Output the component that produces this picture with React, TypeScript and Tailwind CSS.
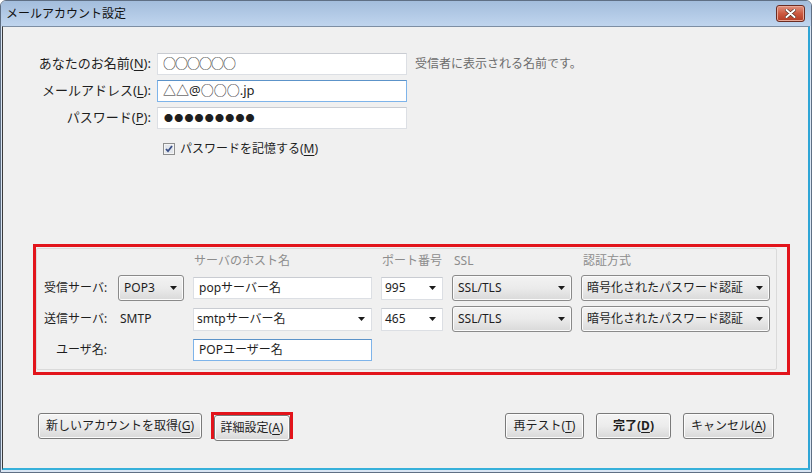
import React from "react"

const font = "font-['Noto_Sans','Noto_Sans_CJK_JP',sans-serif]"

function Arrow() {
    return (
        <svg width="7" height="4" viewBox="0 0 7 4" className="shrink-0">
            <path d="M0 0h7L3.5 4z" fill="#1b1b1b" />
        </svg>
    )
}

function Key({ k }: { k: string }) {
    return <span className="underline underline-offset-2">{k}</span>
}

// grey drop-down button (non editable combo)
function DropButton({ label, className }: { label: string; className: string }) {
    return (
        <div className={`flex h-[26px] items-center justify-between rounded-[3px] border border-[#8a8a8a] bg-gradient-to-b from-[#f3f3f3] via-[#ebebeb] to-[#d9d9d9] pl-[5px] pr-[6px] text-[12px] text-[#1e1e1e] shadow-[inset_0_0_0_1px_#fbfbfb] ${className}`}>
            <span>{label}</span>
            <Arrow />
        </div>
    )
}

// white editable combo
function EditCombo({ value, className }: { value: string; className: string }) {
    return (
        <div className={`flex h-[23px] items-center justify-between border border-[#dcdfe4] border-t-[#c9ccd2] bg-white pl-[3px] pr-[6px] text-[12px] text-[#1e1e1e] ${className}`}>
            <span>{value}</span>
            <Arrow />
        </div>
    )
}

function TextBox({ value, className, focused }: { value: React.ReactNode; className: string; focused?: boolean }) {
    return (
        <div className={`flex items-center bg-white pl-[5px] text-[#1e1e1e] border ${focused ? "border-[#7eb4ea] border-t-[#5c93c9]" : "border-[#dcdfe4] border-t-[#c9ccd2]"} ${className}`}>
            {value}
        </div>
    )
}

function Button({ children, className }: { children: React.ReactNode; className: string }) {
    return (
        <button className={`flex h-[26px] items-center justify-center rounded-[3px] border border-[#7a7a7a] bg-gradient-to-b from-[#f4f4f4] via-[#ececec] to-[#d8d8d8] text-[12px] text-[#1e1e1e] shadow-[inset_0_0_0_1px_#fcfcfc] ${className}`}>
            {children}
        </button>
    )
}

export default function App() {
    return (
        <div className={`${font} flex h-[473px] w-[812px] flex-col rounded-t-[6px] border border-[#5f6f84] bg-[#d9e5f3]`}>
            {/* title bar */}
            <div className="flex h-[25px] shrink-0 items-center justify-between rounded-t-[5px] bg-gradient-to-b from-[#a3bddc] to-[#c0d5ee] pl-[5px] pr-[6px]">
                <span className="text-[12px] text-[#111]">メールアカウント設定</span>
                <div className="flex h-[17px] w-[29px] items-center justify-center rounded-[3px] border border-[#6b2c22] bg-gradient-to-b from-[#e0917f] via-[#cc5a41] to-[#b23a24] shadow-[inset_0_0_0_1px_#e9a898]">
                    <svg width="11" height="9" viewBox="0 0 11 9">
                        <path d="M1.5 1l8 7M9.5 1l-8 7" stroke="#4a2a22" strokeWidth="3.2" strokeLinecap="round" />
                        <path d="M1.5 1l8 7M9.5 1l-8 7" stroke="#fff" strokeWidth="2" strokeLinecap="round" />
                    </svg>
                </div>
            </div>

            {/* client area */}
            <div className="mx-px mb-[2px] flex flex-1 flex-col border-l border-t border-l-[#3b3b3b] border-t-[#7d8ea3] border-r-2 border-b-2 border-r-[#2ea5d6] border-b-[#36b0da] bg-[#f0f0f0] pt-[26px]">
                {/* account fields */}
                <div className="grid grid-cols-[153px_250px_1fr] items-center gap-y-[5px] pl-px text-[13px] text-[#1e1e1e]">
                    <span className="pr-[6px] text-right">あなたのお名前(<Key k="N" />):</span>
                    <TextBox className="h-[22px] text-[13px] tracking-[-1px]" value="○○○○○○" />
                    <span className="pl-[8px] text-[12px] text-[#6d6d6d]">受信者に表示される名前です。</span>

                    <span className="pr-[6px] text-right">メールアドレス(<Key k="L" />):</span>
                    <TextBox focused className="h-[22px] text-[13px]" value="△△@○○○.jp" />
                    <span />

                    <span className="pr-[6px] text-right">パスワード(<Key k="P" />):</span>
                    <TextBox className="h-[22px] pl-[6px] text-[9px] tracking-[1.2px]" value="●●●●●●●●●" />
                    <span />

                    <span />
                    <label className="mt-[7px] flex h-[16px] items-center gap-[5px] pl-[6px] text-[12px]">
                        <svg width="12" height="12" viewBox="0 0 12 12" className="shrink-0">
                            <rect x="0.5" y="0.5" width="11" height="11" fill="#f4f4f4" stroke="#8e8f8f" />
                            <rect x="2" y="2" width="8" height="8" fill="#e2e6ec" />
                            <path d="M3 6l2 2.2L9 3" stroke="#3a4f86" strokeWidth="1.8" fill="none" />
                        </svg>
                        <span>パスワードを記憶する(<Key k="M" />)</span>
                    </label>
                    <span />
                </div>

                {/* server settings */}
                <div className="ml-[30px] mt-[87px] h-[131px] w-[757px] border-[3px] border-[#e2141b]">
                    <div className="mr-[10px] mt-px grid h-[122px] grid-cols-[65px_66px_179px_62px_120px_189px] grid-rows-[18px_26px_26px_26px] items-center gap-x-[9px] gap-y-[5px] rounded-[2px] border border-[#dadada] pl-[7px] pt-[3px] text-[12px] text-[#1e1e1e]">
                        <span />
                        <span />
                        <span className="pl-px text-[#8d8d8d]">サーバのホスト名</span>
                        <span className="pl-px text-[#8d8d8d]">ポート番号</span>
                        <span className="pl-[2px] text-[#8d8d8d]">SSL</span>
                        <span className="pl-[2px] text-[#8d8d8d]">認証方式</span>

                        <span>受信サーバ:</span>
                        <DropButton className="w-[66px]" label="POP3" />
                        <TextBox className="h-[22px] pl-[3px] text-[12px]" value="popサーバー名" />
                        <EditCombo className="w-[62px]" value="995" />
                        <DropButton className="w-[120px]" label="SSL/TLS" />
                        <DropButton className="w-[189px]" label="暗号化されたパスワード認証" />

                        <span>送信サーバ:</span>
                        <span className="pl-[2px]">SMTP</span>
                        <EditCombo className="w-[179px]" value="smtpサーバー名" />
                        <EditCombo className="w-[62px]" value="465" />
                        <DropButton className="w-[120px]" label="SSL/TLS" />
                        <DropButton className="w-[189px]" label="暗号化されたパスワード認証" />

                        <span className="pl-[12px]">ユーザ名:</span>
                        <span />
                        <TextBox focused className="h-[22px] pl-[3px] text-[12px]" value="POPユーザー名" />
                        <span />
                        <span />
                        <span />
                    </div>
                </div>

                {/* buttons */}
                <div className="mt-[37px] flex items-center justify-between pl-[35px] pr-[34px]">
                    <div className="flex items-center gap-[9px]">
                        <Button className="w-[164px]">新しいアカウントを取得(<Key k="G" />)</Button>
                        <div className="flex h-[27px] w-[82px] border-[3px] border-[#e2141b]">
                            <Button className="h-[21px] w-full">詳細設定(<Key k="A" />)</Button>
                        </div>
                    </div>
                    <div className="flex items-center gap-[12px]">
                        <Button className="w-[79px]">再テスト(<Key k="T" />)</Button>
                        <Button className="w-[75px] font-bold">完了(<Key k="D" />)</Button>
                        <Button className="w-[91px]">キャンセル(<Key k="A" />)</Button>
                    </div>
                </div>
            </div>
        </div>
    )
}
